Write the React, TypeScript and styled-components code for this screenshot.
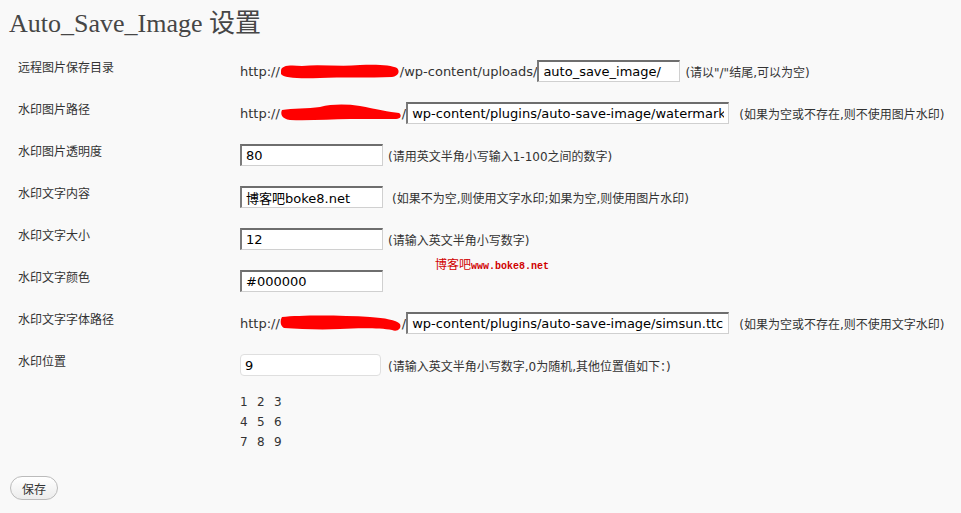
import React from "react";
import styled, { createGlobalStyle } from "styled-components";

const GlobalStyle = createGlobalStyle`
  html, body { margin: 0; padding: 0; background: #f9f9f9; }
  body {
    font-family: "DejaVu Sans", "Noto Sans CJK SC", sans-serif;
    font-size: 12px;
    color: #333;
  }
`;

const Page = styled.div`
  position: relative;
  padding: 9px 9px 0 9px;
  min-height: 504px;
`;

const Title = styled.h2`
  margin: 0 0 11px 0;
  font-family: "Liberation Serif", "Noto Sans CJK SC", serif;
  font-weight: normal;
  font-size: 26px;
  line-height: 30px;
  color: #464646;
`;

const FormTable = styled.div`
  display: flex;
  flex-direction: column;
`;

const Row = styled.div`
  display: grid;
  grid-template-columns: 231px 1fr;
`;

const Label = styled.div`
  padding: 10px 0 0 9px;
  line-height: 16px;
  font-size: 12px;
  color: #333;
`;

const Field = styled.div`
  padding: 10px 0;
`;

const FieldLine = styled.div`
  display: flex;
  align-items: center;
  height: 22px;
  white-space: nowrap;
`;

const UrlText = styled.span`
  font-size: 13px;
  color: #333;
`;

const TextInput = styled.input<{ $w: number; $soft?: boolean }>`
  box-sizing: border-box;
  width: ${(p) => p.$w}px;
  height: 22px;
  margin: 0;
  padding: 0 4px;
  font: 13px "DejaVu Sans", "Noto Sans CJK SC", sans-serif;
  color: #000;
  background: #fff;
  outline: none;
  border-style: solid;
  border-width: ${(p) => (p.$soft ? "1px" : "2px 1px 1px 2px")};
  border-color: ${(p) =>
    p.$soft ? "#dfdfdf" : "#6e6e6e #d0d0d0 #d0d0d0 #7a7a7a"};
  border-radius: ${(p) => (p.$soft ? "4px" : "0")};
`;

const Hint = styled.span<{ $gap: number }>`
  margin-left: ${(p) => p.$gap}px;
  font-size: 12px;
  color: #333;
`;

const PositionGrid = styled.div`
  margin-top: 16px;
  display: grid;
  grid-template-columns: repeat(3, 17px);
  grid-auto-rows: 20px;
  line-height: 20px;
  font-size: 12px;
  color: #333;
`;

const SaveButton = styled.button`
  margin: 14px 0 0 1px;
  box-sizing: border-box;
  width: 48px;
  height: 24px;
  padding: 0;
  border: 1px solid #bbb;
  border-radius: 12px;
  background: linear-gradient(#ffffff, #ececec);
  font: 12px "Noto Sans CJK SC", sans-serif;
  color: #333;
`;

const Watermark = styled.div`
  position: absolute;
  left: 435px;
  top: 257px;
  color: #d00000;
  font-size: 12px;
  line-height: 16px;
  white-space: nowrap;
`;

const MonoPart = styled.span`
  font-family: "Liberation Mono", monospace;
  font-size: 10px;
  font-weight: bold;
`;

const RedactSvg = styled.svg`
  display: block;
  flex: none;
`;

const blobPaths: Record<string, string> = {
  a: "M1,9 C1,3 10,3 22,4 C40,2 60,5 80,3 C96,2 112,3 117,6 C120,9 119,14 112,15 C90,16 60,15 40,16 C20,17 3,16 1,12 Z",
  b: "M2,6 C12,4 28,5 40,3 C52,0 66,0 80,2 C95,5 110,8 119,9 C122,11 121,15 116,15 C100,15 85,15 70,15 C50,15 30,17 10,16 C2,15 0,10 2,6 Z",
  c: "M2,3 C20,1 60,1 90,3 C105,4 116,6 120,10 C122,15 117,18 112,16 C100,14 80,14 60,15 C40,16 20,15 4,14 C0,12 0,6 2,3 Z",
};

const Redaction: React.FC<{ shape: "a" | "b" | "c"; width: number }> = ({ shape, width }) => (
  <RedactSvg width={width} height={18} viewBox={`0 0 ${width} 18`}>
    <path d={blobPaths[shape]} fill="#ff0000" />
  </RedactSvg>
);

export default function App() {
  return (
    <>
      <GlobalStyle />
      <Page>
        <Title>Auto_Save_Image 设置</Title>
        <FormTable>
          <Row>
            <Label>远程图片保存目录</Label>
            <Field>
              <FieldLine>
                <UrlText>http://</UrlText>
                <Redaction shape="a" width={120} />
                <UrlText>/wp-content/uploads/</UrlText>
                <TextInput $w={143} defaultValue="auto_save_image/" />
                <Hint $gap={5}>(请以"/"结尾,可以为空)</Hint>
              </FieldLine>
            </Field>
          </Row>
          <Row>
            <Label>水印图片路径</Label>
            <Field>
              <FieldLine>
                <UrlText>http://</UrlText>
                <Redaction shape="b" width={122} />
                <UrlText>/</UrlText>
                <TextInput $w={323} defaultValue="wp-content/plugins/auto-save-image/watermark.png" />
                <Hint $gap={10}>(如果为空或不存在,则不使用图片水印)</Hint>
              </FieldLine>
            </Field>
          </Row>
          <Row>
            <Label>水印图片透明度</Label>
            <Field>
              <FieldLine>
                <TextInput $w={143} defaultValue="80" />
                <Hint $gap={5}>(请用英文半角小写输入1-100之间的数字)</Hint>
              </FieldLine>
            </Field>
          </Row>
          <Row>
            <Label>水印文字内容</Label>
            <Field>
              <FieldLine>
                <TextInput $w={143} defaultValue="博客吧boke8.net" />
                <Hint $gap={9}>(如果不为空,则使用文字水印;如果为空,则使用图片水印)</Hint>
              </FieldLine>
            </Field>
          </Row>
          <Row>
            <Label>水印文字大小</Label>
            <Field>
              <FieldLine>
                <TextInput $w={143} defaultValue="12" />
                <Hint $gap={5}>(请输入英文半角小写数字)</Hint>
              </FieldLine>
            </Field>
          </Row>
          <Row>
            <Label>水印文字颜色</Label>
            <Field>
              <FieldLine>
                <TextInput $w={143} defaultValue="#000000" />
              </FieldLine>
            </Field>
          </Row>
          <Row>
            <Label>水印文字字体路径</Label>
            <Field>
              <FieldLine>
                <UrlText>http://</UrlText>
                <Redaction shape="c" width={122} />
                <UrlText>/</UrlText>
                <TextInput $w={323} defaultValue="wp-content/plugins/auto-save-image/simsun.ttc" />
                <Hint $gap={10}>(如果为空或不存在,则不使用文字水印)</Hint>
              </FieldLine>
            </Field>
          </Row>
          <Row>
            <Label>水印位置</Label>
            <Field>
              <FieldLine>
                <TextInput $w={141} $soft defaultValue="9" />
                <Hint $gap={7}>(请输入英文半角小写数字,0为随机,其他位置值如下：)</Hint>
              </FieldLine>
              <PositionGrid>
                {["1", "2", "3", "4", "5", "6", "7", "8", "9"].map((n) => (
                  <span key={n}>{n}</span>
                ))}
              </PositionGrid>
            </Field>
          </Row>
        </FormTable>
        <SaveButton>保存</SaveButton>
        <Watermark>
          博客吧<MonoPart>www.boke8.net</MonoPart>
        </Watermark>
      </Page>
    </>
  );
}
